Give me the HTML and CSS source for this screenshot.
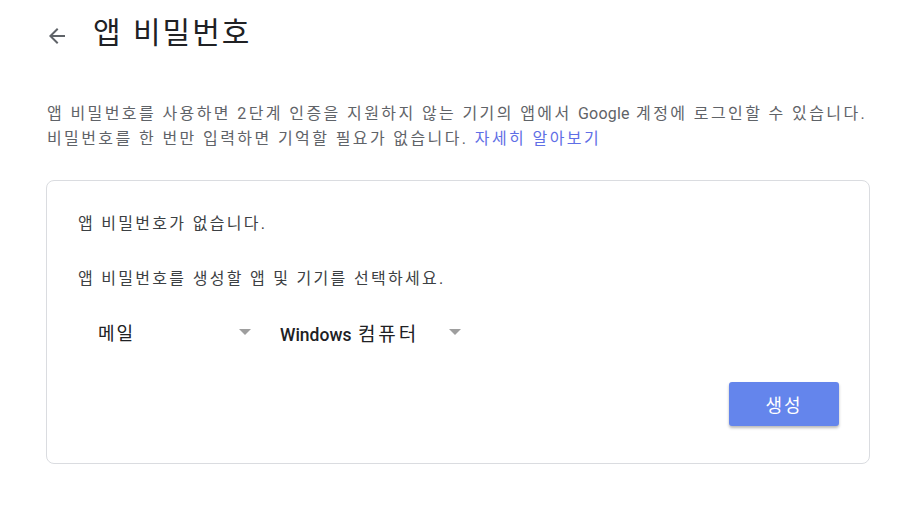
FILE: index.html
```html
<!DOCTYPE html>
<html lang="ko">
<head>
    <meta charset="UTF-8">
    <meta name="viewport" content="width=device-width, initial-scale=1.0">
    <title>앱 비밀번호</title>
    <link rel="stylesheet" href="styles.css">
</head>
<body>
    <div id="wrap">
        <!-- 상단 제목 -->
        <div class="header">
            <button class="back" aria-label="뒤로">
                <svg width="24" height="24" viewBox="0 0 24 24"><path d="M20 11H7.83l5.59-5.59L12 4l-8 8 8 8 1.41-1.41L7.83 13H20v-2z" fill="#5f6368"/></svg>
            </button>
            <h1 class="title">앱 비밀번호</h1>
        </div>

        <p class="desc">
            앱 비밀번호를 사용하면 2단계 인증을 지원하지 않는 기기의 앱에서 <span class="en">Google</span> 계정에 로그인할 수 있습니다.<br>
            비밀번호를 한 번만 입력하면 기억할 필요가 없습니다. <a href="#" class="link">자세히 알아보기</a>
        </p>

        <!-- 앱 비밀번호 생성 카드 -->
        <div class="card">
            <p class="msg">앱 비밀번호가 없습니다.</p>
            <p class="msg second">앱 비밀번호를 생성할 앱 및 기기를 선택하세요.</p>
            <div class="selects">
                <div class="select app">
                    <span class="label">메일</span>
                    <span class="caret"></span>
                </div>
                <div class="select device">
                    <span class="label"><span class="en bold">Windows</span> <span class="ko">컴퓨터</span></span>
                    <span class="caret"></span>
                </div>
            </div>
            <div class="actions">
                <button class="create">생성</button>
            </div>
        </div>
    </div>
</body>
</html>
```

FILE: styles.css
```css
* {
    box-sizing: border-box;
}
body {
    margin: 0;
    background-color: #fff;
    font-family: Roboto, "Noto Sans CJK KR", "Noto Sans", sans-serif;
    color: #202124;
}
#wrap {
    width: 824px;
    margin-left: 46px;
}
.header {
    display: flex;
    align-items: center;
    height: 66px;
}
.back {
    width: 24px;
    height: 24px;
    padding: 0;
    margin: 6px 24px 0 -1px;
    border: none;
    background: none;
    display: flex;
    cursor: pointer;
}
.title {
    margin: 0 0 6px 0;
    font-family: "Noto Sans CJK KR", sans-serif;
    font-size: 30px;
    font-weight: 400;
    letter-spacing: 2px;
    color: #202124;
}
.desc {
    margin: 35px 0 0 1px;
    font-size: 16px;
    line-height: 25px;
    letter-spacing: 2.4px;
    color: #5f6368;
}
.desc .en {
    letter-spacing: 0.2px;
}
.link {
    color: #5f6fe6;
    text-decoration: none;
}
.card {
    margin-top: 29px;
    border: 1px solid #dadce0;
    border-radius: 8px;
    padding: 31px 30px 37px 31px;
}
.msg {
    margin: 0;
    font-size: 16px;
    line-height: 24px;
    letter-spacing: 2.3px;
    color: #3c4043;
}
.msg.second {
    margin-top: 31px;
}
.selects {
    display: flex;
    margin-top: 17px;
    height: 48px;
}
.select {
    display: flex;
    align-items: center;
    justify-content: space-between;
    padding: 0 11px 0 20px;
}
.select.app {
    width: 184px;
}
.select.device {
    width: 210px;
    padding-left: 18px;
}
.label {
    font-size: 18px;
    letter-spacing: 2px;
    color: #202124;
}
.label .bold {
    font-size: 17.5px;
    font-weight: 500;
    letter-spacing: 0;
}
.label .ko {
    font-size: 19px;
    letter-spacing: 3px;
}
.caret {
    width: 0;
    height: 0;
    border-left: 6px solid transparent;
    border-right: 6px solid transparent;
    border-top: 6px solid #9e9e9e;
}
.actions {
    display: flex;
    justify-content: flex-end;
    margin-top: 26px;
}
.create {
    width: 110px;
    height: 44px;
    border: none;
    border-radius: 3px;
    background-color: #6485ec;
    color: #fff;
    font-family: "Noto Sans CJK KR", sans-serif;
    font-size: 18px;
    letter-spacing: 2px;
    box-shadow: 0 2px 3px rgba(0, 0, 0, 0.28);
    cursor: pointer;
}
```
